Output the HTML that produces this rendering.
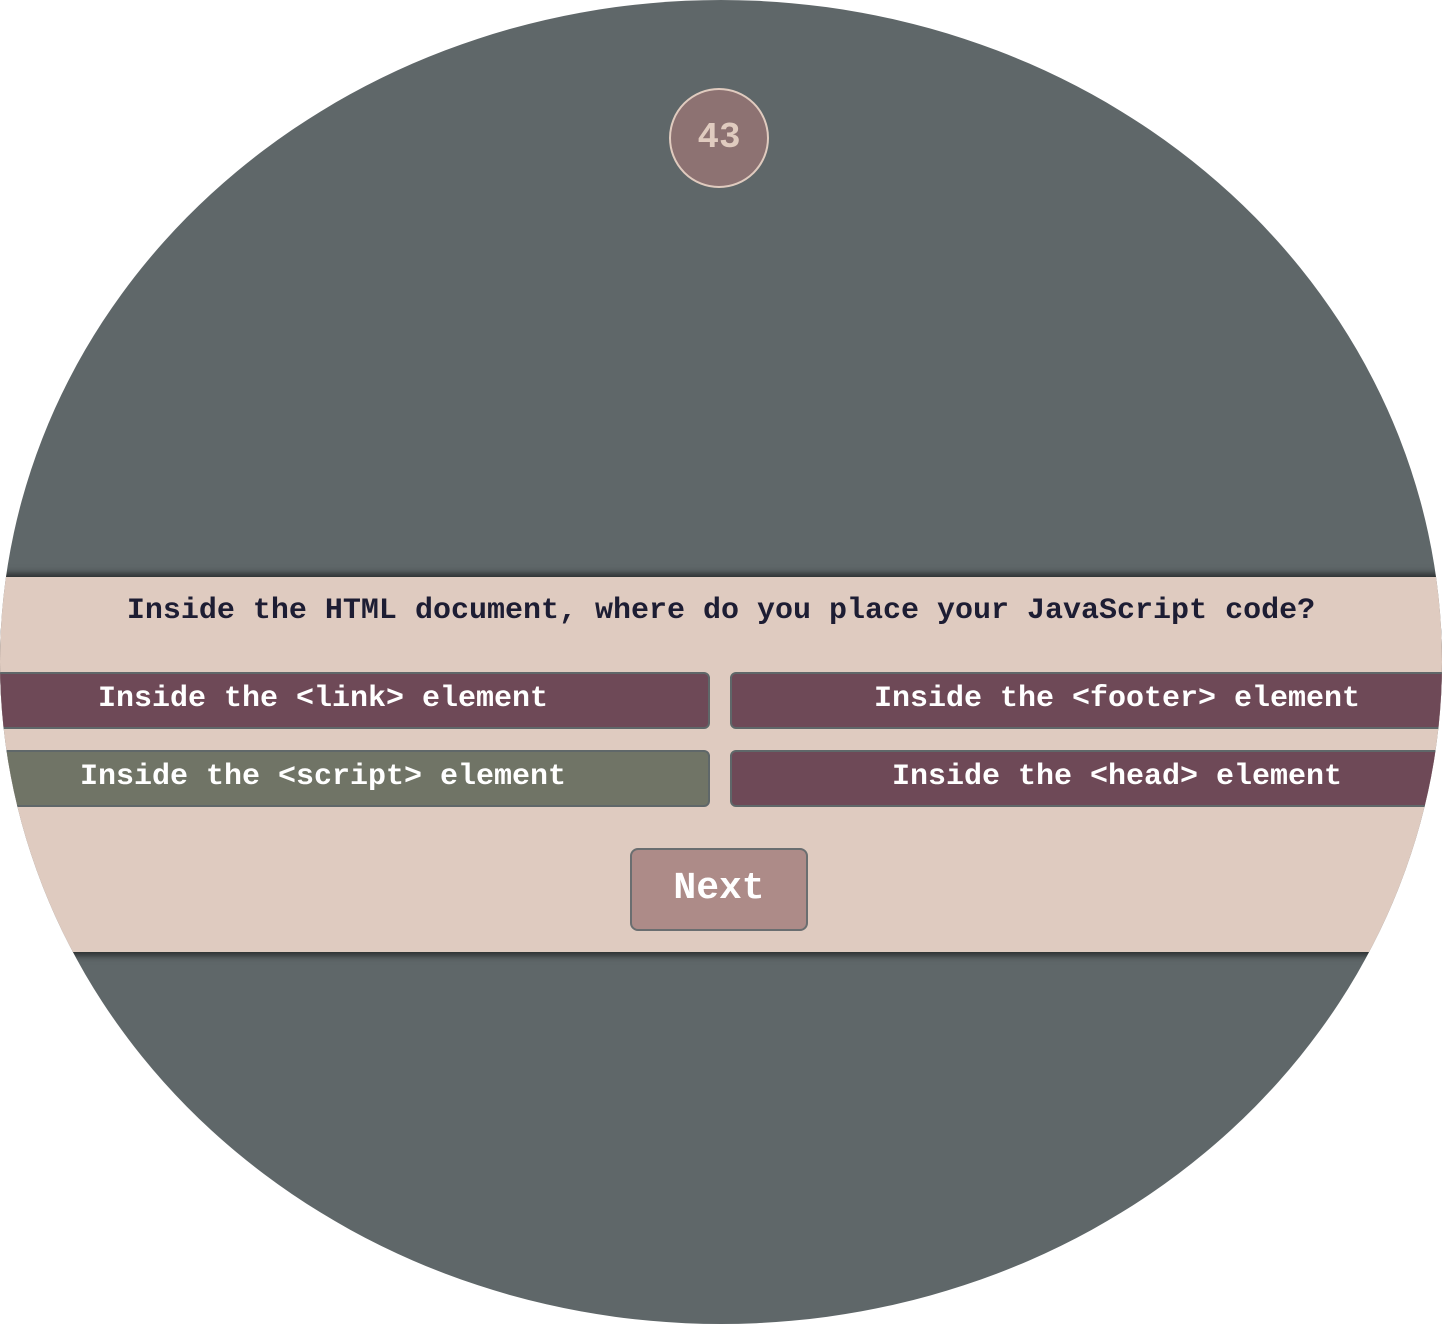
<!DOCTYPE html>
<html><head><style>
html,body{margin:0;padding:0;background:#fff;width:1442px;height:1324px;overflow:hidden}
.e{position:absolute;left:0;top:0;width:1442px;height:1324px;border-radius:50%;background:#5f6769;overflow:hidden}
.badge{position:absolute;left:669px;top:88px;width:96px;height:96px;border-radius:50%;background:#8d7272;border:2px solid #e0cbbf;color:#e0cbbf;font:bold 36px/96px "Liberation Mono",monospace;text-align:center}
.band{position:absolute;left:0;top:577px;width:1442px;height:375px;background:#dfcbc0;box-shadow:0 -4px 6px rgba(0,0,0,.5),0 4px 6px rgba(0,0,0,.5)}
.q{position:absolute;left:0;width:1442px;top:14px;text-align:center;color:#1d1d33;font:bold 30px/40px "Liberation Mono",monospace}
.b{position:absolute;width:774px;height:57px;box-sizing:border-box;border:2px solid #5f6769;border-radius:6px;background:#6e4957;color:#fff;text-align:center;font:bold 30px/50px "Liberation Mono",monospace}
.g{background:#707466}
.n{position:absolute;left:630px;top:271px;width:178px;height:83px;box-sizing:border-box;border:2px solid #6a6e70;border-radius:8px;background:#ad8b88;color:#fff;text-align:center;font:bold 38px/78px "Liberation Mono",monospace}
</style></head><body>
<div class="e">
<div class="badge">43</div>
<div class="band">
<div class="q">Inside the HTML document, where do you place your JavaScript code?</div>
<div class="b" style="left:-64px;top:95px">Inside the &lt;link&gt; element</div>
<div class="b" style="left:730px;top:95px">Inside the &lt;footer&gt; element</div>
<div class="b g" style="left:-64px;top:173px">Inside the &lt;script&gt; element</div>
<div class="b" style="left:730px;top:173px">Inside the &lt;head&gt; element</div>
<div class="n">Next</div>
</div>
</div>
</body></html>
